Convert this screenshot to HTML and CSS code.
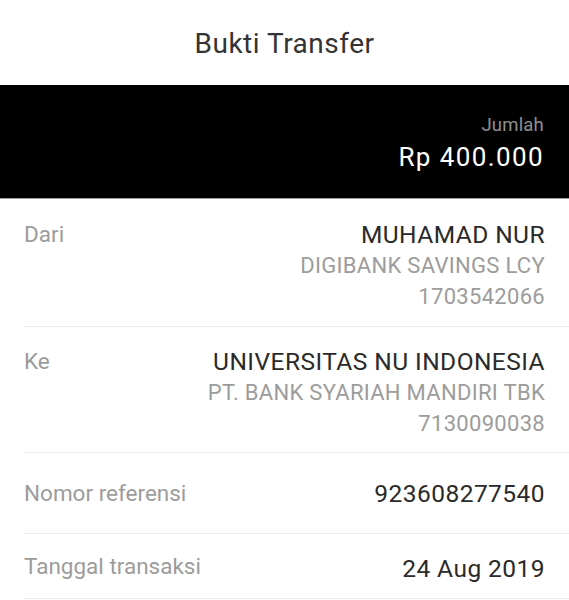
FILE: index.html
```html
<!DOCTYPE html>
<html>
<head>
<meta charset="utf-8">
<link rel="stylesheet" href="styles.css">
</head>
<body>
<header class="topbar">
  <h1 class="title">Bukti Transfer</h1>
</header>
<section class="amount">
  <div class="amount-label">Jumlah</div>
  <div class="amount-value">Rp 400.000</div>
</section>
<main class="details">
  <div class="row row-from">
    <div class="label">Dari</div>
    <div class="values">
      <div class="main">MUHAMAD NUR</div>
      <div class="sub">DIGIBANK SAVINGS LCY</div>
      <div class="sub">1703542066</div>
    </div>
  </div>
  <div class="row row-to">
    <div class="label">Ke</div>
    <div class="values">
      <div class="main">UNIVERSITAS NU INDONESIA</div>
      <div class="sub">PT. BANK SYARIAH MANDIRI TBK</div>
      <div class="sub">7130090038</div>
    </div>
  </div>
  <div class="row row-ref">
    <div class="label">Nomor referensi</div>
    <div class="values">
      <div class="main">923608277540</div>
    </div>
  </div>
  <div class="row row-date">
    <div class="label">Tanggal transaksi</div>
    <div class="values values-low">
      <div class="main">24 Aug 2019</div>
    </div>
  </div>
</main>
</body>
</html>
```
FILE: styles.css
```css
html, body {
  margin: 0;
  padding: 0;
  background: #ffffff;
}
body {
  font-family: Roboto, "Noto Sans", sans-serif;
  width: 569px;
  overflow: hidden;
}
.topbar {
  padding: 27px 0 25px;
  text-align: center;
}
.title {
  margin: 0;
  font-size: 28px;
  line-height: 33px;
  font-weight: 400;
  color: #343434;
  letter-spacing: 0.5px;
}
.amount {
  background: #000000;
  box-sizing: border-box;
  border-bottom: 1px solid #9a9a9a;
  height: 114px;
  padding: 28px 25px 0 24px;
  text-align: right;
}
.amount-label {
  font-size: 18.5px;
  line-height: 24px;
  color: #8f8f8f;
  letter-spacing: 0.2px;
}
.amount-value {
  margin-top: 4px;
  font-size: 26px;
  line-height: 32px;
  color: #ffffff;
  letter-spacing: 1.4px;
}
.details {
  display: flex;
  flex-direction: column;
}
.row {
  display: flex;
  justify-content: space-between;
  align-items: flex-start;
  margin-left: 24px;
  padding-right: 24px;
  border-bottom: 1px solid #ececec;
}
.row-from {
  padding-top: 20px;
  padding-bottom: 14px;
}
.row-to {
  padding-top: 19px;
  padding-bottom: 13px;
}
.row-ref {
  padding-top: 25px;
  padding-bottom: 24px;
}
.row-date {
  padding-top: 17px;
  padding-bottom: 14px;
}
.label {
  font-size: 22.5px;
  line-height: 31px;
  color: #9c9c9c;
}
.values {
  text-align: right;
}
.values-low {
  margin-top: 2px;
}
.main {
  font-size: 24.5px;
  line-height: 31px;
  color: #2a2a2a;
  letter-spacing: 0.45px;
}
.sub {
  font-size: 22px;
  line-height: 31px;
  color: #9c9c9c;
  letter-spacing: 0.3px;
}
```
